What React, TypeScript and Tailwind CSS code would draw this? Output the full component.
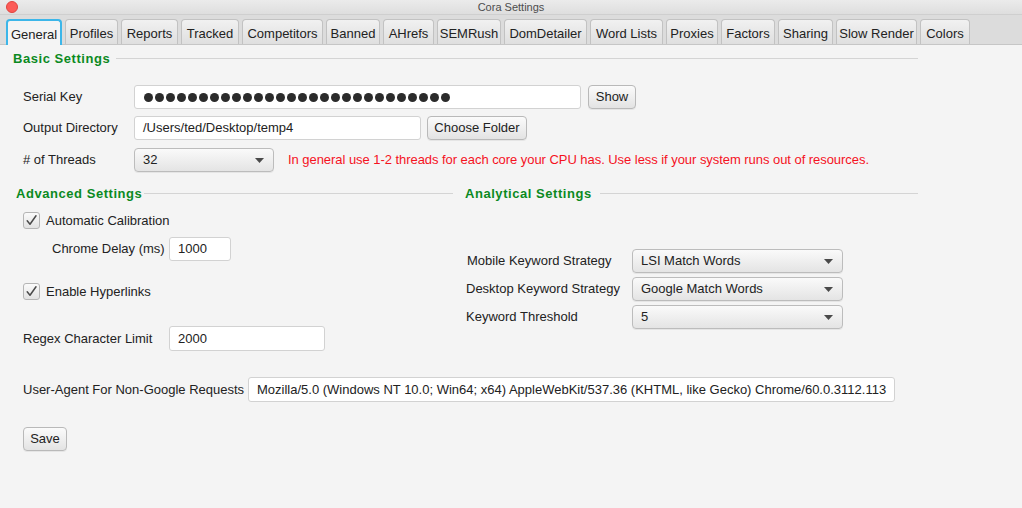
import React from "react";

const tabs: { label: string; w: string }[] = [
  { label: "General", w: "w-[56px]" },
  { label: "Profiles", w: "w-[53px]" },
  { label: "Reports", w: "w-[57px]" },
  { label: "Tracked", w: "w-[58px]" },
  { label: "Competitors", w: "w-[81px]" },
  { label: "Banned", w: "w-[54px]" },
  { label: "AHrefs", w: "w-[51px]" },
  { label: "SEMRush", w: "w-[64px]" },
  { label: "DomDetailer", w: "w-[83px]" },
  { label: "Word Lists", w: "w-[73px]" },
  { label: "Proxies", w: "w-[52px]" },
  { label: "Factors", w: "w-[54px]" },
  { label: "Sharing", w: "w-[55px]" },
  { label: "Slow Render", w: "w-[81px]" },
  { label: "Colors", w: "w-[50px]" },
];

function Heading({ text, lineClass }: { text: string; lineClass?: string }) {
  return (
    <div className="flex items-center h-[16px]">
      <span className="font-bold text-[#0b8a1f] text-[13px] leading-none tracking-[0.55px]">{text}</span>
      <div className={"flex-1 h-px bg-[#d4d4d4] " + (lineClass ?? "ml-[6px]")} />
    </div>
  );
}

function Input({ value, className }: { value: string; className: string }) {
  return (
    <div
      className={
        "bg-white border border-[#d2d2d2] rounded-[3px] flex items-center pl-[8px] text-[13px] text-[#222] whitespace-nowrap overflow-hidden " +
        className
      }
    >
      {value}
    </div>
  );
}

function Button({ label, className }: { label: string; className: string }) {
  return (
    <div
      className={
        "border border-[#b9b9b9] rounded-[4px] bg-gradient-to-b from-[#fbfbfb] to-[#e3e3e3] shadow-[0_1px_0_rgba(0,0,0,0.06)] flex items-center justify-center text-[13px] text-[#222] " +
        className
      }
    >
      {label}
    </div>
  );
}

function Select({ value, className }: { value: string; className: string }) {
  return (
    <div
      className={
        "border border-[#bcbcbc] rounded-[4px] bg-gradient-to-b from-[#fafafa] to-[#e4e4e4] shadow-[0_1px_0_rgba(0,0,0,0.06)] flex items-center justify-between pl-[8px] pr-[9px] text-[13px] text-[#222] " +
        className
      }
    >
      <span>{value}</span>
      <svg width="9" height="5" viewBox="0 0 9 5">
        <polygon points="0,0 9,0 4.5,5" fill="#4a4a4a" />
      </svg>
    </div>
  );
}

function Checkbox({ label }: { label: string }) {
  return (
    <div className="flex items-center h-[17px]">
      <div className="w-[17px] h-[17px] border border-[#b5b5b5] rounded-[3px] bg-gradient-to-b from-[#fbfbfb] to-[#e2e2e2] flex items-center justify-center">
        <svg width="13" height="13" viewBox="0 0 13 13">
          <polyline points="2.2,6.8 5,10.2 11,1.8" fill="none" stroke="#4a4a4a" strokeWidth="1.5" strokeLinecap="round" strokeLinejoin="round" />
        </svg>
      </div>
      <span className="ml-[6px] text-[13px] text-[#222]">{label}</span>
    </div>
  );
}

export default function App() {
  return (
    <div
      className="w-[1022px] h-[508px] bg-[#f4f4f4] flex flex-col overflow-hidden text-[#222] text-[13px]"
      style={{ fontFamily: '"Liberation Sans", Arial, sans-serif' }}
    >
      {/* title bar */}
      <div className="h-[14px] bg-gradient-to-b from-[#ebebeb] to-[#dedede] flex items-center relative">
        <div className="ml-[6px] w-[12px] h-[12px] rounded-full bg-[#fc5b57] border border-[#e0443e]" />
        <div className="flex-1 text-center text-[11px] leading-none text-[#4d4d4d] mr-[18px]">Cora Settings</div>
      </div>
      {/* tab bar */}
      <div className="h-[31px] bg-[#dcdcdc] border-t border-[#cfcfcf] border-b border-b-[#c6c6c6] flex items-end pl-[6px] gap-[3px]">
        {tabs.map((t, i) =>
          i === 0 ? (
            <div
              key={t.label}
              className={
                t.w +
                " h-[26px] -mb-px pt-[3px] border-[2px] border-b-0 border-[#3cb6e9] rounded-t-[4px] bg-[#f4f4f4] flex items-center justify-center text-[13px] text-[#222]"
              }
            >
              {t.label}
            </div>
          ) : (
            <div
              key={t.label}
              className={
                t.w +
                " h-[25px] pt-[3px] border border-b-0 border-[#c2c2c2] rounded-t-[4px] bg-gradient-to-b from-[#f1f1f1] to-[#dfdfdf] flex items-center justify-center text-[13px] text-[#222]"
              }
            >
              {t.label}
            </div>
          )
        )}
      </div>

      {/* content */}
      <div className="flex flex-col">
        <div className="ml-[13px] w-[905px] mt-[5px]">
          <Heading text="Basic Settings" />
        </div>

        <div className="ml-[23px] flex flex-col">
          <div className="mt-[19px] flex items-center h-[24px]">
            <div className="w-[111px]">Serial Key</div>
            <div className="w-[447px] h-[24px] bg-white border border-[#d2d2d2] rounded-[3px] flex items-center pl-[9px] gap-[2px]">
              {Array.from({ length: 28 }).map((_, i) => (
                <span key={i} className="w-[9px] h-[9px] rounded-full bg-[#2b2b2b]" />
              ))}
            </div>
            <Button label="Show" className="ml-[7px] w-[48px] h-[24px]" />
          </div>

          <div className="mt-[7px] flex items-center h-[24px]">
            <div className="w-[111px]">Output Directory</div>
            <Input value="/Users/ted/Desktop/temp4" className="w-[287px] h-[24px]" />
            <Button label="Choose Folder" className="ml-[6px] w-[100px] h-[24px]" />
          </div>

          <div className="mt-[8px] flex items-center h-[24px]">
            <div className="w-[111px]">{"# of Threads"}</div>
            <Select value="32" className="w-[140px] h-[24px]" />
            <div className="ml-[14px] text-[#f5121e] tracking-[-0.05px]">
              In general use 1-2 threads for each core your CPU has. Use less if your system runs out of resources.
            </div>
          </div>
        </div>

        <div className="flex mt-[13px]">
          {/* left column */}
          <div className="ml-[16px] w-[437px] flex flex-col">
            <Heading text="Advanced Settings" lineClass="ml-[2px]" />
            <div className="ml-[7px] mt-[11px]">
              <Checkbox label="Automatic Calibration" />
            </div>
            <div className="ml-[36px] mt-[8px] flex items-center h-[24px]">
              <div className="w-[117px]">Chrome Delay (ms)</div>
              <Input value="1000" className="w-[62px] h-[24px]" />
            </div>
            <div className="ml-[7px] mt-[22px]">
              <Checkbox label="Enable Hyperlinks" />
            </div>
            <div className="ml-[7px] mt-[26px] flex items-center h-[25px]">
              <div className="w-[146px]">Regex Character Limit</div>
              <Input value="2000" className="w-[156px] h-[25px]" />
            </div>
          </div>

          {/* right column */}
          <div className="ml-[12px] w-[453px] flex flex-col">
            <Heading text="Analytical Settings" lineClass="ml-[8px]" />
            <div className="ml-[2px] mt-[48px] flex items-center h-[24px]">
              <div className="w-[165px]">Mobile Keyword Strategy</div>
              <Select value="LSI Match Words" className="w-[211px] h-[24px]" />
            </div>
            <div className="ml-[1px] mt-[4px] flex items-center h-[24px]">
              <div className="w-[166px]">Desktop Keyword Strategy</div>
              <Select value="Google Match Words" className="w-[211px] h-[24px]" />
            </div>
            <div className="ml-[1px] mt-[4px] flex items-center h-[24px]">
              <div className="w-[166px]">Keyword Threshold</div>
              <Select value="5" className="w-[211px] h-[24px]" />
            </div>
          </div>
        </div>

        <div className="ml-[23px] mt-[26px] flex items-center h-[25px]">
          <div className="w-[225px]">User-Agent For Non-Google Requests</div>
          <Input
            value="Mozilla/5.0 (Windows NT 10.0; Win64; x64) AppleWebKit/537.36 (KHTML, like Gecko) Chrome/60.0.3112.113"
            className="w-[647px] h-[25px]"
          />
        </div>

        <div className="ml-[23px] mt-[25px]">
          <Button label="Save" className="w-[44px] h-[24px]" />
        </div>
      </div>
    </div>
  );
}
